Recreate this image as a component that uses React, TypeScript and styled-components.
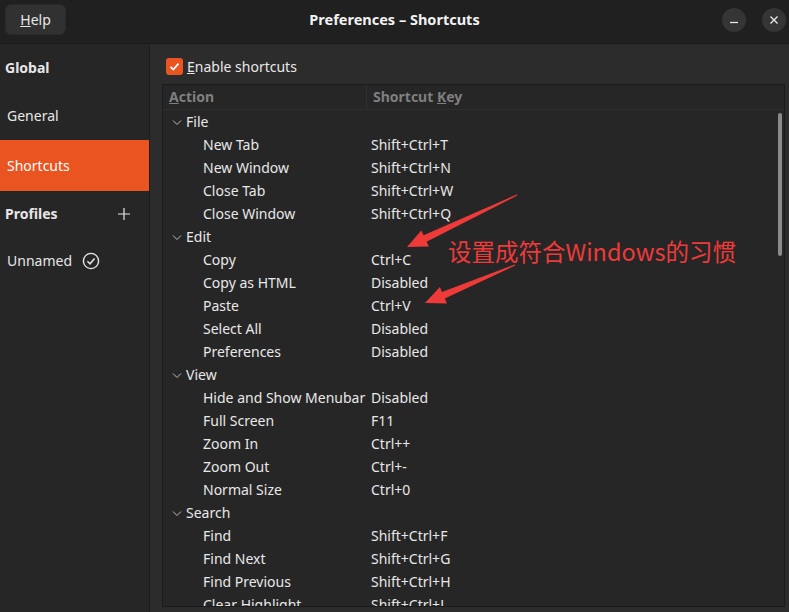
import React from 'react';
import styled, { createGlobalStyle } from 'styled-components';

const GlobalStyle = createGlobalStyle`
  html, body { margin: 0; padding: 0; background: #2c2c2c; }
  body {
    font-family: "Noto Sans", "Noto Sans CJK SC", sans-serif;
    font-size: 14px;
    color: #e8e8e8;
  }
  * { box-sizing: border-box; }
`;

const Window = styled.div`
  position: relative;
  width: 789px;
  height: 612px;
  display: flex;
  flex-direction: column;
  overflow: hidden;
  background: #2c2c2c;
`;

const HeaderBar = styled.header`
  height: 44px;
  padding-top: 4px;
  background: #202020;
  border-bottom: 1px solid #1a1a1a;
  display: grid;
  grid-template-columns: 1fr auto 1fr;
  align-items: start;
`;

const HelpButton = styled.button`
  justify-self: start;
  margin-left: 5px;
  width: 61px;
  height: 31px;
  border-radius: 6px;
  border: 1px solid #2a2a2a;
  background: #313131;
  color: #e8e8e8;
  font-family: inherit;
  font-size: 14px;
  padding: 0;
`;

const Title = styled.div`
  height: 31px;
  line-height: 31px;
  font-weight: 700;
  font-size: 14.5px;
  color: #f2f2f2;
`;

const Controls = styled.div`
  justify-self: end;
  margin-right: 3px;
  margin-top: 4px;
  display: flex;
  gap: 16px;
`;

const RoundButton = styled.div`
  width: 24px;
  height: 24px;
  border-radius: 50%;
  background: #353535;
  display: flex;
  align-items: center;
  justify-content: center;
`;

const Body = styled.div`
  flex: 1;
  min-height: 0;
  display: flex;
`;

const Sidebar = styled.nav`
  width: 150px;
  flex: none;
  background: #262626;
  border-right: 1px solid #1c1c1c;
  display: flex;
  flex-direction: column;
`;

const SideRow = styled.div<{ $h: number; $selected?: boolean; $heading?: boolean }>`
  height: ${(p) => p.$h}px;
  display: flex;
  align-items: center;
  padding-left: ${(p) => (p.$heading ? 5 : 7)}px;
  padding-right: 18px;
  background: ${(p) => (p.$selected ? '#e95420' : 'transparent')};
  color: ${(p) => (p.$selected ? '#ffffff' : '#e6e6e6')};
  font-weight: ${(p) => (p.$heading ? 700 : 400)};
  font-size: 14px;
`;

const SideLabel = styled.span`
  flex: 1;
`;

const Main = styled.main`
  flex: 1;
  min-width: 0;
  padding: 9px 4px 5px 12px;
  display: flex;
  flex-direction: column;
  gap: 4px;
`;

const CheckRow = styled.label`
  height: 27px;
  display: flex;
  align-items: center;
  gap: 4px;
  padding-left: 4px;
  font-size: 14px;
  color: #e8e8e8;
`;

const CheckBox = styled.span`
  width: 17px;
  height: 17px;
  border-radius: 3px;
  background: #e95420;
  display: flex;
  align-items: center;
  justify-content: center;
`;

const Tree = styled.div`
  position: relative;
  flex: 1;
  min-height: 0;
  border: 1px solid #1b1b1b;
  background: #262626;
  overflow: hidden;
`;

const HeadRow = styled.div`
  height: 25px;
  display: grid;
  grid-template-columns: 204px 1fr;
  border-bottom: 1px solid #2e2e2e;
`;

const HeadCell = styled.div<{ $divider?: boolean }>`
  display: flex;
  align-items: center;
  padding-left: 6px;
  padding-bottom: 1px;
  font-weight: 700;
  color: #7f7f7f;
  border-right: ${(p) => (p.$divider ? '1px solid #303030' : 'none')};
`;

const Row = styled.div`
  height: 23px;
  display: grid;
  grid-template-columns: 204px 1fr;
  align-items: center;
  white-space: nowrap;
`;

const ActionCell = styled.div<{ $group?: boolean }>`
  display: flex;
  align-items: center;
  gap: 4px;
  padding-left: ${(p) => (p.$group ? 9 : 40)}px;
  color: #e8e8e8;
`;

const KeyCell = styled.div`
  padding-left: 4px;
  color: #e8e8e8;
`;

const Scrollbar = styled.div`
  position: absolute;
  right: 2px;
  top: 28px;
  width: 4px;
  height: 143px;
  border-radius: 2px;
  background: #8a8a8a;
`;

const Annotation = styled.div`
  position: absolute;
  left: 448px;
  top: 234px;
  font-family: "Noto Sans CJK SC", "Noto Sans", sans-serif;
  font-size: 23.5px;
  line-height: 34px;
  color: #ef3a3a;
  white-space: nowrap;
  pointer-events: none;
`;

const Overlay = styled.svg`
  position: absolute;
  left: 0;
  top: 0;
  pointer-events: none;
`;

const Chevron = () => (
  <svg width="10" height="10" viewBox="0 0 10 10">
    <path d="M1 3.5 L5 7.5 L9 3.5" fill="none" stroke="#bdbdbd" strokeWidth="1" />
  </svg>
);

type Item = { label: string; key?: string; group?: boolean };

const items: Item[] = [
  { label: 'File', group: true },
  { label: 'New Tab', key: 'Shift+Ctrl+T' },
  { label: 'New Window', key: 'Shift+Ctrl+N' },
  { label: 'Close Tab', key: 'Shift+Ctrl+W' },
  { label: 'Close Window', key: 'Shift+Ctrl+Q' },
  { label: 'Edit', group: true },
  { label: 'Copy', key: 'Ctrl+C' },
  { label: 'Copy as HTML', key: 'Disabled' },
  { label: 'Paste', key: 'Ctrl+V' },
  { label: 'Select All', key: 'Disabled' },
  { label: 'Preferences', key: 'Disabled' },
  { label: 'View', group: true },
  { label: 'Hide and Show Menubar', key: 'Disabled' },
  { label: 'Full Screen', key: 'F11' },
  { label: 'Zoom In', key: 'Ctrl++' },
  { label: 'Zoom Out', key: 'Ctrl+-' },
  { label: 'Normal Size', key: 'Ctrl+0' },
  { label: 'Search', group: true },
  { label: 'Find', key: 'Shift+Ctrl+F' },
  { label: 'Find Next', key: 'Shift+Ctrl+G' },
  { label: 'Find Previous', key: 'Shift+Ctrl+H' },
  { label: 'Clear Highlight', key: 'Shift+Ctrl+J' },
];

export default function App() {
  return (
    <Window>
      <GlobalStyle />
      <HeaderBar>
        <HelpButton>
          <u>H</u>elp
        </HelpButton>
        <Title>Preferences – Shortcuts</Title>
        <Controls>
          <RoundButton>
            <svg width="10" height="10" viewBox="0 0 10 10">
              <path d="M1 7.5 H9" stroke="#e6e6e6" strokeWidth="1.3" />
            </svg>
          </RoundButton>
          <RoundButton>
            <svg width="10" height="10" viewBox="0 0 10 10">
              <path d="M1.5 1.5 L8.5 8.5 M8.5 1.5 L1.5 8.5" stroke="#e6e6e6" strokeWidth="1.4" />
            </svg>
          </RoundButton>
        </Controls>
      </HeaderBar>
      <Body>
        <Sidebar>
          <SideRow $h={46} $heading>
            <SideLabel>Global</SideLabel>
          </SideRow>
          <SideRow $h={50}>
            <SideLabel>General</SideLabel>
          </SideRow>
          <SideRow $h={51} $selected>
            <SideLabel>Shortcuts</SideLabel>
          </SideRow>
          <SideRow $h={45} $heading>
            <SideLabel>Profiles</SideLabel>
            <svg width="14" height="14" viewBox="0 0 14 14">
              <path d="M7 1 V13 M1 7 H13" stroke="#e6e6e6" strokeWidth="1.2" />
            </svg>
          </SideRow>
          <SideRow $h={49}>
            <span>Unnamed</span>
            <svg width="18" height="18" viewBox="0 0 18 18" style={{ marginLeft: 10 }}>
              <circle cx="9" cy="9" r="7.6" fill="none" stroke="#e6e6e6" strokeWidth="1.4" />
              <path d="M5.4 9.3 L8 11.8 L12.6 6.4" fill="none" stroke="#e6e6e6" strokeWidth="1.5" />
            </svg>
          </SideRow>
        </Sidebar>
        <Main>
          <CheckRow>
            <CheckBox>
              <svg width="13" height="13" viewBox="0 0 13 13">
                <path d="M2.5 6.8 L5.3 9.5 L10.5 3.6" fill="none" stroke="#ffffff" strokeWidth="1.8" />
              </svg>
            </CheckBox>
            <span>
              <u>E</u>nable shortcuts
            </span>
          </CheckRow>
          <Tree>
            <HeadRow>
              <HeadCell $divider>
                <span>
                  <u>A</u>ction
                </span>
              </HeadCell>
              <HeadCell>
                <span>
                  Shortcut <u>K</u>ey
                </span>
              </HeadCell>
            </HeadRow>
            {items.map((it) => (
              <Row key={it.label}>
                <ActionCell $group={it.group}>
                  {it.group && <Chevron />}
                  <span>{it.label}</span>
                </ActionCell>
                <KeyCell>{it.key ?? ''}</KeyCell>
              </Row>
            ))}
            <Scrollbar />
          </Tree>
        </Main>
      </Body>
      <Overlay width="789" height="612" viewBox="0 0 789 612">
        <polygon
          points="407,247 428.9,246.6 426.6,241.7 517.2,195.5 516.8,194.5 423.6,235.3 421.3,230.4"
          fill="#ef3a3a"
        />
        <polygon
          points="425,303 446.9,303.5 444.8,298.4 515.2,265.5 514.8,264.5 442,292 439.9,286.9"
          fill="#ef3a3a"
        />
      </Overlay>
      <Annotation>设置成符合Windows的习惯</Annotation>
    </Window>
  );
}
